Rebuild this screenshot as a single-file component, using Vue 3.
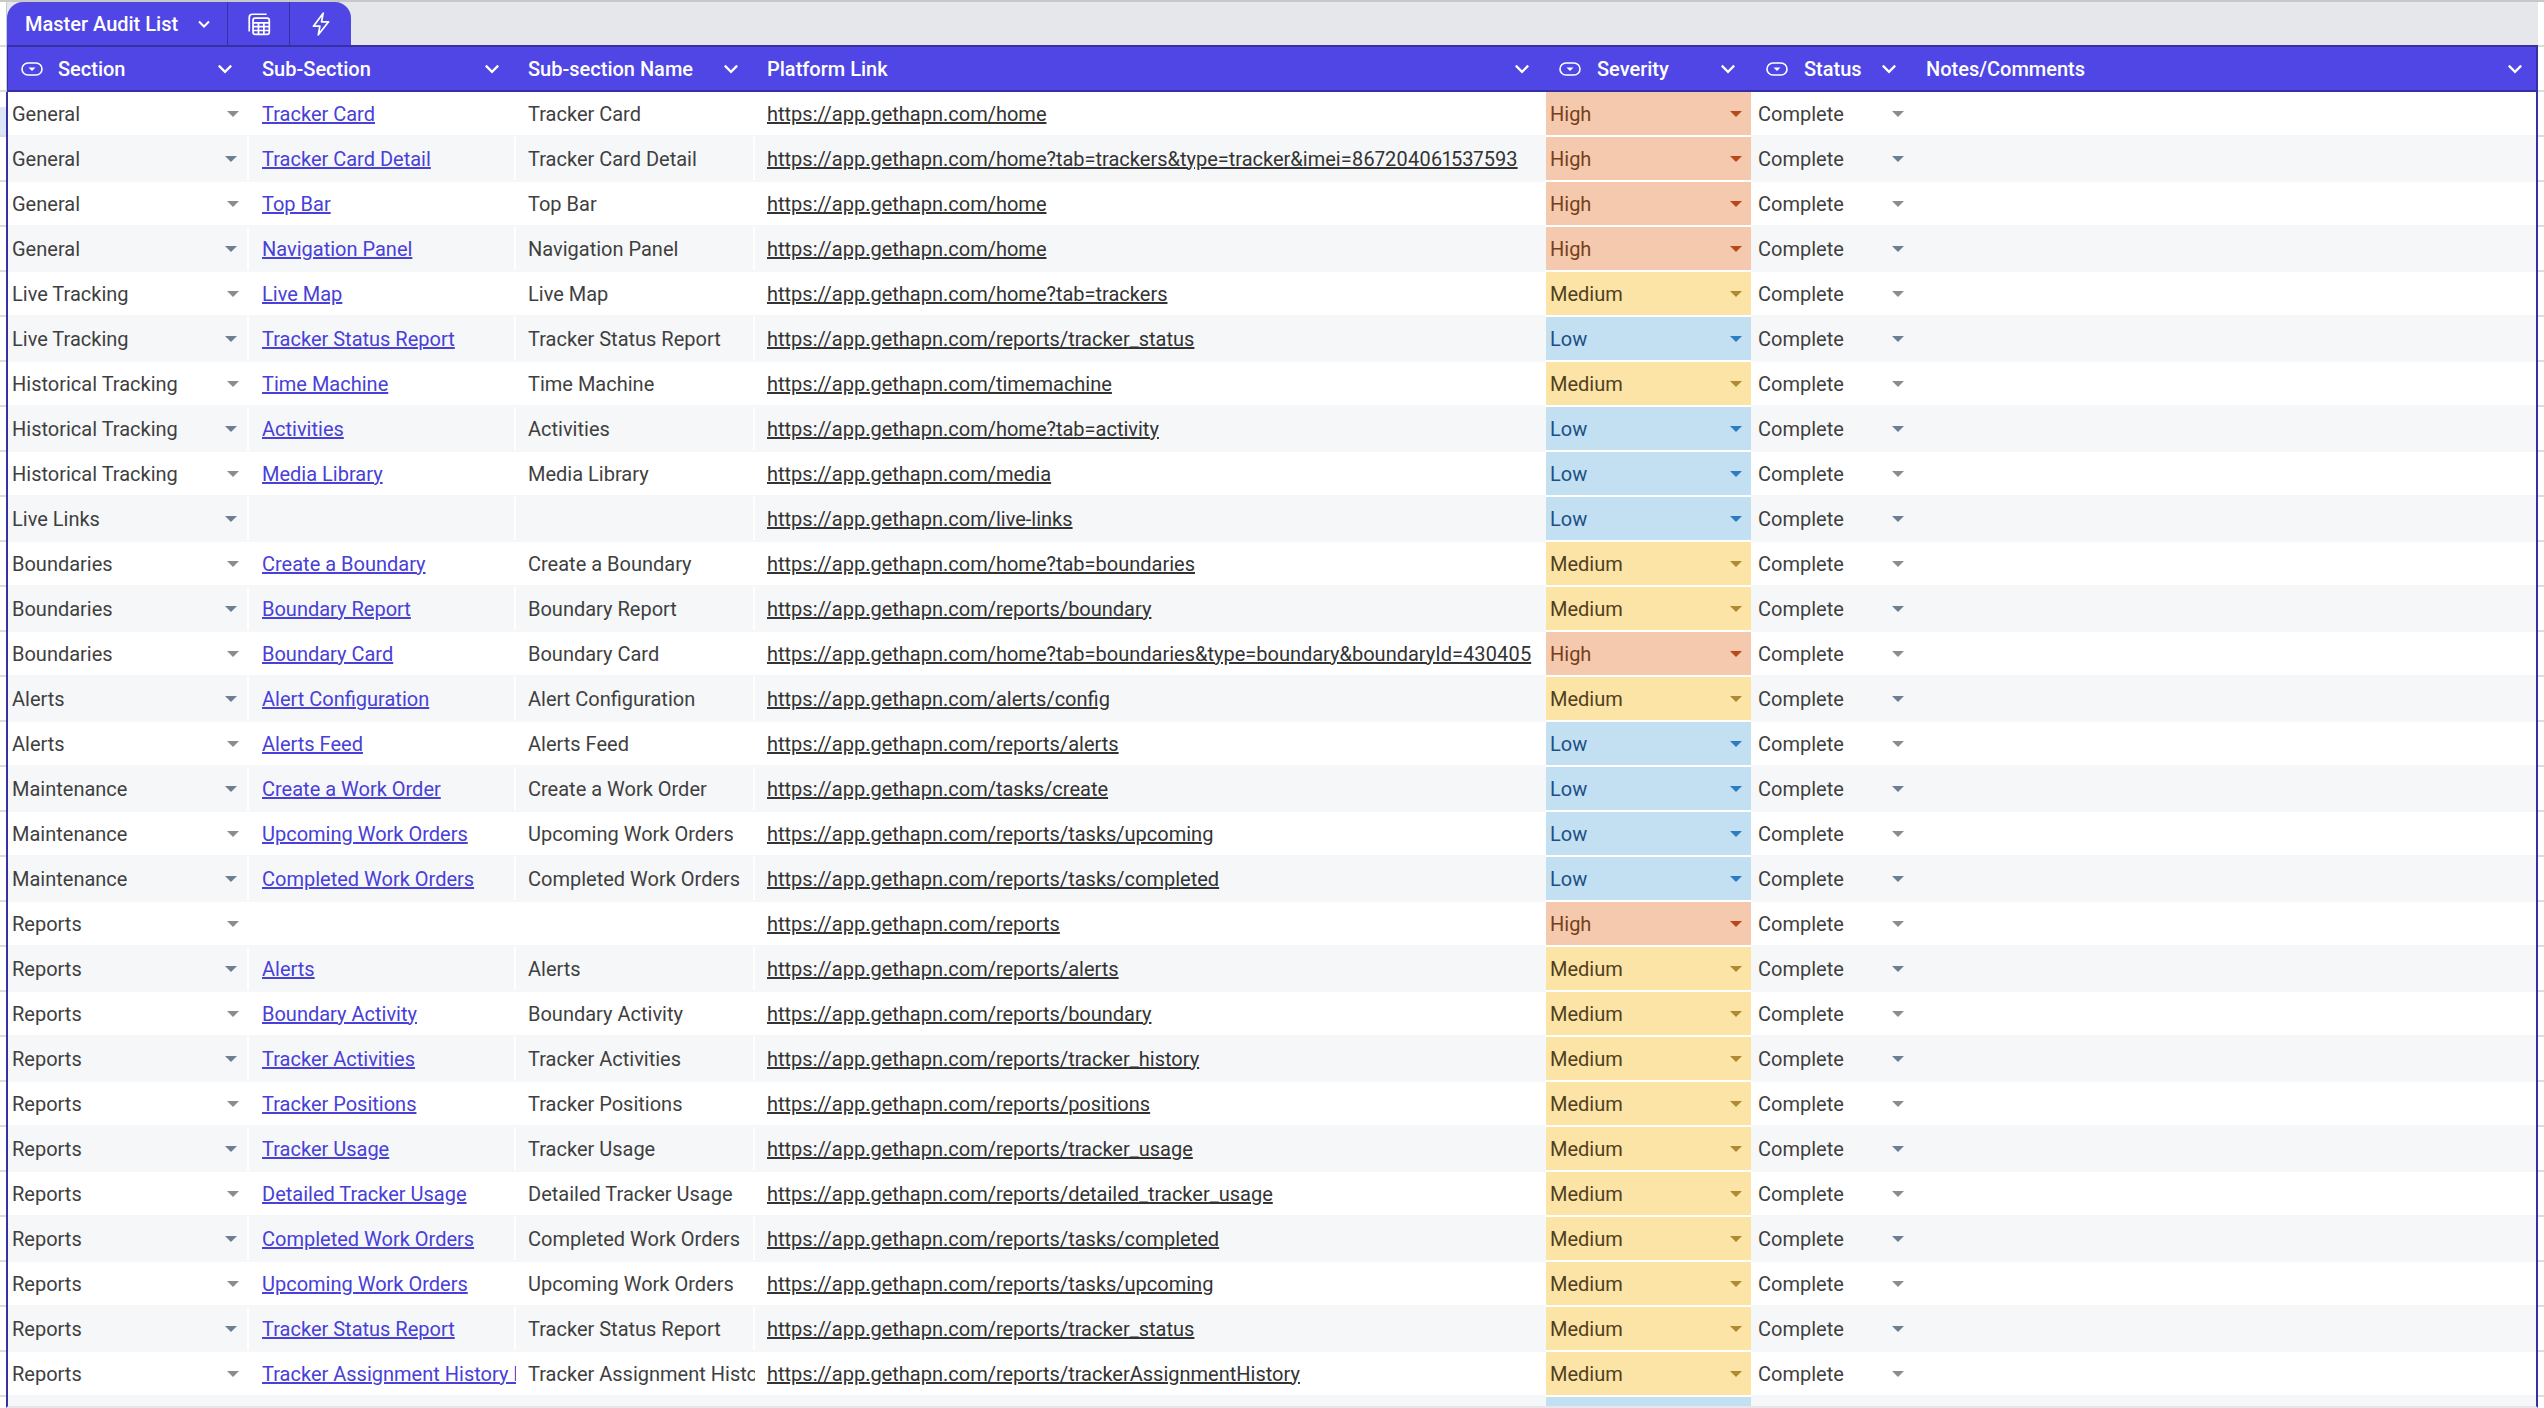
<template>
    <div class="page">
        <div class="side left-side"></div>

        <div class="sheet">
            <!-- tab bar -->
            <div class="tab-bar">
                <div class="tab">
                    <div class="tab-name">
                        <span>Master Audit List</span>
                        <svg class="tab-chevron" viewBox="0 0 16 16"><path d="M3 5.5l5 5 5-5" /></svg>
                    </div>
                    <div class="tab-btn">
                        <svg class="tab-icon" viewBox="0 0 24 24">
                            <path d="M3 19V6a3 3 0 0 1 3-3h13" />
                            <rect x="6.5" y="6.5" width="15" height="15" rx="2" />
                            <path d="M6.5 11h15M6.5 14.5h15M6.5 18h15M11.5 11v10.5M16.5 11v10.5" />
                        </svg>
                    </div>
                    <div class="tab-btn">
                        <svg class="tab-icon" viewBox="0 0 24 24">
                            <path d="M14 2L5 14h6l-1.5 8L19 10h-6.5L14 2z" />
                        </svg>
                    </div>
                </div>
            </div>

            <!-- column headers -->
            <div class="grid-row head">
                <div class="head-cell" v-for="col in columns" :key="col.name" :class="col.cls">
                    <svg v-if="col.pill" class="pill" viewBox="0 0 22 14">
                        <rect x="1" y="1" width="20" height="12" rx="6" />
                        <path class="pill-caret" d="M7.5 5.5h7L11 9z" />
                    </svg>
                    <span class="head-name">{{ col.name }}</span>
                    <svg class="head-chevron" viewBox="0 0 16 16"><path d="M2.5 5l5.5 5.5L13.5 5" /></svg>
                </div>
            </div>

            <!-- rows -->
            <div class="body">
                <div class="grid-row row" v-for="(row, i) in rows" :key="i" :class="{ striped: i % 2 === 1 }">
                    <div class="cell section">
                        <span>{{ row[0] }}</span>
                        <i class="caret"></i>
                    </div>
                    <div class="cell sub">
                        <a class="sub-link">{{ row[1] }}</a>
                    </div>
                    <div class="cell name">{{ row[1] }}</div>
                    <div class="cell link"><a>https://app.gethapn.com/{{ row[2] }}</a></div>
                    <div class="cell severity" :class="row[3]">
                        <span>{{ row[3] }}</span>
                        <i class="caret"></i>
                    </div>
                    <div class="cell status">
                        <span>Complete</span>
                        <i class="caret"></i>
                    </div>
                    <div class="cell notes"></div>
                </div>
                <div class="grid-row row striped tail">
                    <div></div><div></div><div></div><div></div>
                    <div class="cell severity Low"></div>
                    <div></div><div></div>
                </div>
            </div>
        </div>

        <div class="side right-side"></div>
    </div>
</template>

<script setup>
    const columns = [
        { name: 'Section', pill: true, cls: 'h-section' },
        { name: 'Sub-Section', cls: 'h-sub' },
        { name: 'Sub-section Name', cls: 'h-name' },
        { name: 'Platform Link', cls: 'h-link' },
        { name: 'Severity', pill: true, cls: 'h-severity' },
        { name: 'Status', pill: true, cls: 'h-status' },
        { name: 'Notes/Comments', cls: 'h-notes' },
    ];

    // section, sub-section, path, severity
    const rows = [
        ['General', 'Tracker Card', 'home', 'High'],
        ['General', 'Tracker Card Detail', 'home?tab=trackers&type=tracker&imei=867204061537593', 'High'],
        ['General', 'Top Bar', 'home', 'High'],
        ['General', 'Navigation Panel', 'home', 'High'],
        ['Live Tracking', 'Live Map', 'home?tab=trackers', 'Medium'],
        ['Live Tracking', 'Tracker Status Report', 'reports/tracker_status', 'Low'],
        ['Historical Tracking', 'Time Machine', 'timemachine', 'Medium'],
        ['Historical Tracking', 'Activities', 'home?tab=activity', 'Low'],
        ['Historical Tracking', 'Media Library', 'media', 'Low'],
        ['Live Links', '', 'live-links', 'Low'],
        ['Boundaries', 'Create a Boundary', 'home?tab=boundaries', 'Medium'],
        ['Boundaries', 'Boundary Report', 'reports/boundary', 'Medium'],
        ['Boundaries', 'Boundary Card', 'home?tab=boundaries&type=boundary&boundaryId=430405', 'High'],
        ['Alerts', 'Alert Configuration', 'alerts/config', 'Medium'],
        ['Alerts', 'Alerts Feed', 'reports/alerts', 'Low'],
        ['Maintenance', 'Create a Work Order', 'tasks/create', 'Low'],
        ['Maintenance', 'Upcoming Work Orders', 'reports/tasks/upcoming', 'Low'],
        ['Maintenance', 'Completed Work Orders', 'reports/tasks/completed', 'Low'],
        ['Reports', '', 'reports', 'High'],
        ['Reports', 'Alerts', 'reports/alerts', 'Medium'],
        ['Reports', 'Boundary Activity', 'reports/boundary', 'Medium'],
        ['Reports', 'Tracker Activities', 'reports/tracker_history', 'Medium'],
        ['Reports', 'Tracker Positions', 'reports/positions', 'Medium'],
        ['Reports', 'Tracker Usage', 'reports/tracker_usage', 'Medium'],
        ['Reports', 'Detailed Tracker Usage', 'reports/detailed_tracker_usage', 'Medium'],
        ['Reports', 'Completed Work Orders', 'reports/tasks/completed', 'Medium'],
        ['Reports', 'Upcoming Work Orders', 'reports/tasks/upcoming', 'Medium'],
        ['Reports', 'Tracker Status Report', 'reports/tracker_status', 'Medium'],
        ['Reports', 'Tracker Assignment History Report', 'reports/trackerAssignmentHistory', 'Medium'],
    ];
</script>

<style>
    html, body {
        margin: 0;
        background: #fff;
        overflow: hidden;
    }
</style>

<style scoped>
    .page {
        display: flex;
        height: 1408px;
        overflow: hidden;
        font-family: Roboto, "Liberation Sans", sans-serif;
        font-size: 20px;
        font-variant-numeric: proportional-nums;
        color: #3f3f3f;
        border-top: 2px solid #c8c8c8;
        box-sizing: border-box;
        background: #fff;
    }
    .side {
        background-image: repeating-linear-gradient(to bottom, #fff 0, #fff 43px, #dcdcdc 43px, #dcdcdc 45px);
    }
    .left-side {
        width: 6px;
        flex: none;
        border-right: 1px solid #c9cbd6;
        background-image: linear-gradient(#dce6f6, #dce6f6), repeating-linear-gradient(to bottom, #fff 0, #fff 43px, #dcdcdc 43px, #dcdcdc 45px);
        background-size: 100% 28px, auto;
        background-position: 0 105px, 0 0;
        background-repeat: no-repeat, repeat;
    }
    .right-side {
        width: 6px;
        flex: none;
    }
    .sheet {
        flex: 1;
        min-width: 0;
        display: flex;
        flex-direction: column;
    }

    /* tab bar */
    .tab-bar {
        height: 43px;
        flex: none;
        background: #e5e7eb;
        display: flex;
    }
    .tab {
        display: flex;
        background: #4f46e5;
        border-radius: 16px 16px 0 0;
        color: #fff;
        font-weight: 500;
    }
    .tab-name {
        width: 221px;
        display: flex;
        align-items: center;
        padding-left: 18px;
        box-sizing: border-box;
        gap: 18px;
        border-right: 1px solid #3730a3;
    }
    .tab-chevron {
        width: 16px;
        height: 16px;
    }
    .tab-chevron path, .head-chevron path {
        fill: none;
        stroke: #fff;
        stroke-width: 2;
    }
    .tab-btn {
        width: 61px;
        display: flex;
        align-items: center;
        justify-content: center;
        border-right: 1px solid #3730a3;
    }
    .tab-btn:last-child {
        border-right: none;
        width: 61px;
    }
    .tab-icon {
        width: 26px;
        height: 26px;
        fill: none;
        stroke: #fff;
        stroke-width: 1.6;
        stroke-linejoin: round;
    }

    .grid-row {
        display: grid;
        grid-template-columns: 241px 267px 239px 791px 205px 162px 1fr;
    }

    /* header */
    .head {
        height: 47px;
        flex: none;
        background: #4f46e5;
        color: #fff;
        box-sizing: border-box;
        border: 2px solid #3730a3;
        border-width: 2px 2px 2px 1px;
        font-weight: 500;
    }
    .head-cell {
        display: flex;
        align-items: center;
        padding: 0 15px 0 13px;
        min-width: 0;
    }
    .h-name {
        padding-left: 12px;
    }
    .h-link {
        padding-left: 12px;
    }
    .h-severity {
        padding-right: 14px;
    }
    .h-status {
        padding-left: 15px;
        padding-right: 15px;
    }
    .h-notes {
        padding-right: 12px;
    }
    .head-name {
        flex: 1;
        white-space: nowrap;
    }
    .pill {
        width: 22px;
        height: 14px;
        margin-right: 15px;
        fill: none;
        stroke: #fff;
        stroke-width: 1.6;
    }
    .h-severity .pill, .h-status .pill {
        margin-right: 16px;
    }
    .pill-caret {
        fill: #fff;
        stroke: none;
    }
    .head-chevron {
        width: 18px;
        height: 18px;
        flex: none;
    }

    /* rows */
    .body {
        flex: 1;
        overflow: hidden;
        border-left: 2px solid #3730a3;
        border-right: 2px solid #3730a3;
        border-bottom: 2px solid #e5e7eb;
        margin-left: -1px;
    }
    .row {
        height: 45px;
    }
    .row.striped {
        background: #f6f7f9;
        box-shadow: 0 -2px 0 #f6f7f9;
    }
    .cell {
        display: flex;
        align-items: center;
        min-width: 0;
        height: 43px;
        white-space: nowrap;
        overflow: hidden;
        box-sizing: border-box;
    }
    .striped .cell {
        border-right: 2px solid #fff;
    }
    .striped .cell.notes, .striped .cell.status, .striped .cell.link {
        border-right: none;
    }
    .section {
        padding: 0 10px 0 4px;
        justify-content: space-between;
    }
    .sub {
        padding-left: 13px;
    }
    .sub-link {
        color: #4840d8;
        text-decoration: underline;
        text-decoration-thickness: 2px;
    }
    .name {
        padding-left: 12px;
    }
    .link {
        padding-left: 12px;
    }
    .link a {
        color: #333;
        text-decoration: underline;
        text-decoration-thickness: 2px;
    }
    .severity {
        height: 45px;
        padding: 0 9px 0 4px;
        justify-content: space-between;
        border-bottom: 2px solid #fff;
    }
    .striped .severity {
        border-right: none;
    }
    .status {
        padding: 0 9px 0 7px;
        justify-content: space-between;
    }
    .High { background: #f5c9ae; color: #76401a; }
    .Medium { background: #fbe4a6; color: #51401c; }
    .Low { background: #c3dff2; color: #1c4f85; }

    .caret {
        width: 0;
        height: 0;
        flex: none;
        border-left: 6px solid transparent;
        border-right: 6px solid transparent;
        border-top: 6px solid #8c8c8c;
    }
    .striped .caret {
        border-top-color: #6d8092;
    }
    .High .caret, .striped .High .caret { border-top-color: #b8491c; }
    .Medium .caret, .striped .Medium .caret { border-top-color: #b08a2e; }
    .Low .caret, .striped .Low .caret { border-top-color: #2b7cc2; }
</style>
